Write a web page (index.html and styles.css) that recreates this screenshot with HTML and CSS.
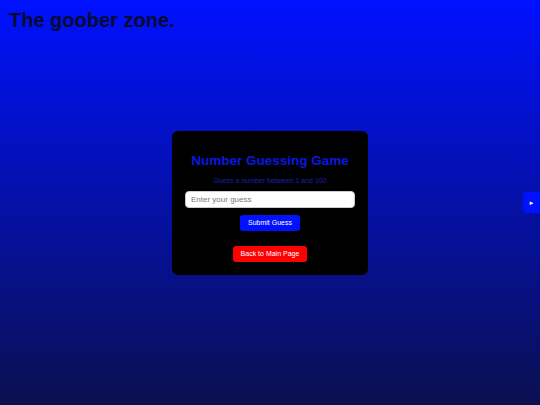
FILE: index.html
```html
<!DOCTYPE html>
<html lang="en">
<head>
    <meta charset="UTF-8">
    <meta name="viewport" content="width=device-width, initial-scale=1.0">
    <title>The goober zone.</title>
    <link rel="stylesheet" href="styles.css">
</head>
<body>
    <h1 class="siteTitle">The goober zone.</h1>
    <div class="game">
        <h2 class="gameTitle">Number Guessing Game</h2>
        <p class="hint">Guess a number between 1 and 100</p>
        <input type="text" id="guess" placeholder="Enter your guess">
        <button id="submit" class="btn">Submit Guess</button>
        <p id="result"></p>
        <button id="back" class="btn back">Back to Main Page</button>
    </div>
    <button class="sideTab">&#9658;</button>
</body>
</html>
```

FILE: styles.css
```css
html{
    height:100%;
}
body{
    margin:0;
    min-height:100vh;
    display:grid;
    grid-template-rows:1fr auto 1fr;
    justify-items:center;
    background:linear-gradient(to bottom, #0011ff 0%, #0a1050 100%);
    font-family:"Liberation Sans", Arial, sans-serif;
}
.siteTitle{
    justify-self:start;
    align-self:start;
    margin:9px 0 0 9px;
    font-size:20px;
    font-weight:bold;
    line-height:22px;
    color:#080a30;
}
.game{
    width:170px;
    padding:21px 13px 13px;
    background:#000;
    border-radius:6px;
    display:flex;
    flex-direction:column;
    align-items:center;
}
.gameTitle{
    margin:0;
    font-size:13.5px;
    line-height:18px;
    color:#0a18e0;
}
.hint{
    margin:6px 0 0;
    font-size:7px;
    line-height:9px;
    color:#1a20b8;
}
#guess{
    box-sizing:border-box;
    width:170px;
    height:17px;
    margin-top:6px;
    padding:0 5px;
    border:1px solid #ccc;
    border-radius:4px;
    font-family:inherit;
    font-size:8px;
    color:#333;
    outline:none;
}
#guess::placeholder{
    color:#777;
}
.btn{
    margin-top:7px;
    height:16px;
    padding:0 8px;
    border:none;
    border-radius:3px;
    background:#0011ff;
    color:#fff;
    font-family:inherit;
    font-size:7px;
    cursor:pointer;
}
#result{
    margin:0;
    height:8px;
}
.back{
    margin-top:7px;
    background:#ff0000;
}
.sideTab{
    position:fixed;
    right:0;
    top:192px;
    width:17px;
    height:21px;
    padding:0;
    border:none;
    border-radius:4px 0 0 4px;
    background:#0011ff;
    color:#fff;
    font-size:6px;
}
```
